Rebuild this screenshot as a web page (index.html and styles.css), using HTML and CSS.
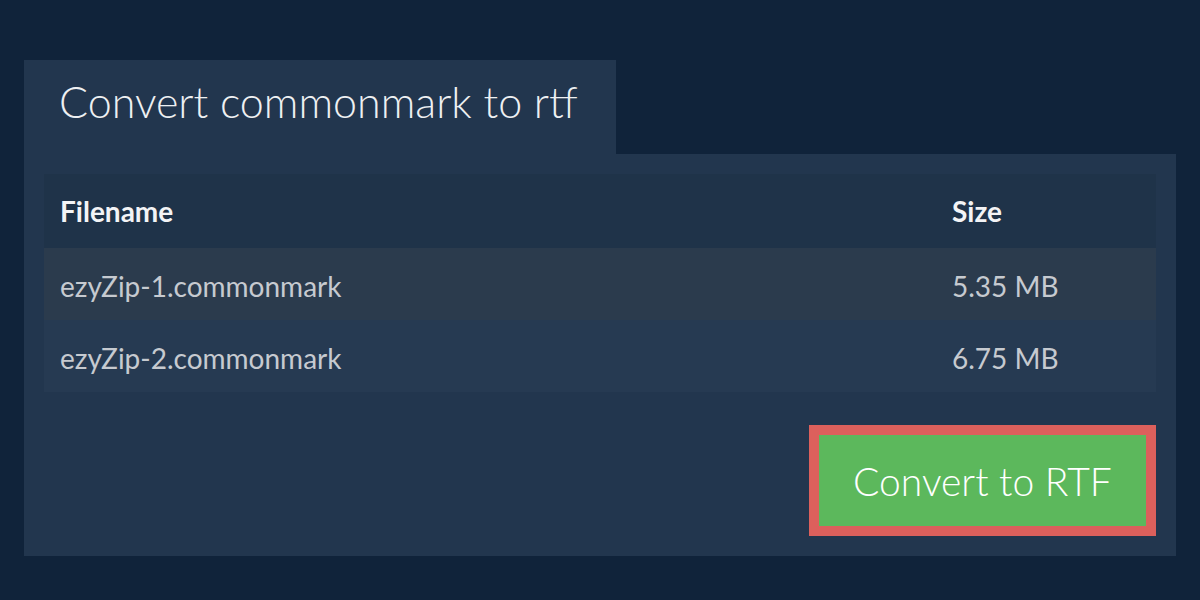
FILE: index.html
```
<!DOCTYPE html>
<html>
<head>
<meta charset="utf-8">
<link rel="stylesheet" href="styles.css">
</head>
<body>
<div class="wrap">
  <div class="tab"><h1 class="title">Convert commonmark to rtf</h1></div>
  <div class="panel">
    <table class="files">
      <thead>
        <tr class="head"><th class="c-name">Filename</th><th class="c-size">Size</th></tr>
      </thead>
      <tbody>
        <tr class="row odd"><td class="c-name">ezyZip-1.commonmark</td><td class="c-size">5.35 MB</td></tr>
        <tr class="row even"><td class="c-name">ezyZip-2.commonmark</td><td class="c-size">6.75 MB</td></tr>
      </tbody>
    </table>
    <div class="actions">
      <button class="convert">Convert to RTF</button>
    </div>
  </div>
</div>
</body>
</html>
```
FILE: styles.css
```
html, body {
  margin: 0;
  padding: 0;
  background: #10233a;
  font-family: Lato, "Open Sans", sans-serif;
}
.wrap {
  padding: 60px 24px 0 24px;
  display: flex;
  flex-direction: column;
  align-items: flex-start;
}
.tab {
  width: 592px;
  height: 94px;
  background: #22364e;
  box-sizing: border-box;
  padding-left: 35px;
}
.title {
  margin: 0;
  font-weight: 300;
  font-size: 43px;
  line-height: 84px;
  color: #eef0f2;
}
.panel {
  align-self: stretch;
  background: #22364e;
  padding: 20px 20px 20px 20px;
  display: flex;
  flex-direction: column;
}
.files {
  width: 100%;
  border-collapse: collapse;
  font-size: 28px;
}
.head {
  background: #1f3349;
  height: 74px;
}
.head th {
  text-align: left;
  font-weight: 700;
  color: #f3f4f6;
  padding: 0 16px;
}
.row {
  height: 72px;
}
.row td {
  color: #c6cad0;
  padding: 3px 16px 0 16px;
}
.odd { background: #2b3b4d; }
.even { background: #263a52; }
.c-name { width: 860px; }
.actions {
  display: flex;
  justify-content: flex-end;
  padding-top: 33px;
}
.convert {
  width: 347px;
  height: 111px;
  background: #5cb85c;
  border: 10px solid #dc605c;
  color: #ffffff;
  font-family: Lato, sans-serif;
  font-weight: 300;
  font-size: 39px;
  padding: 0;
  cursor: pointer;
}
```
